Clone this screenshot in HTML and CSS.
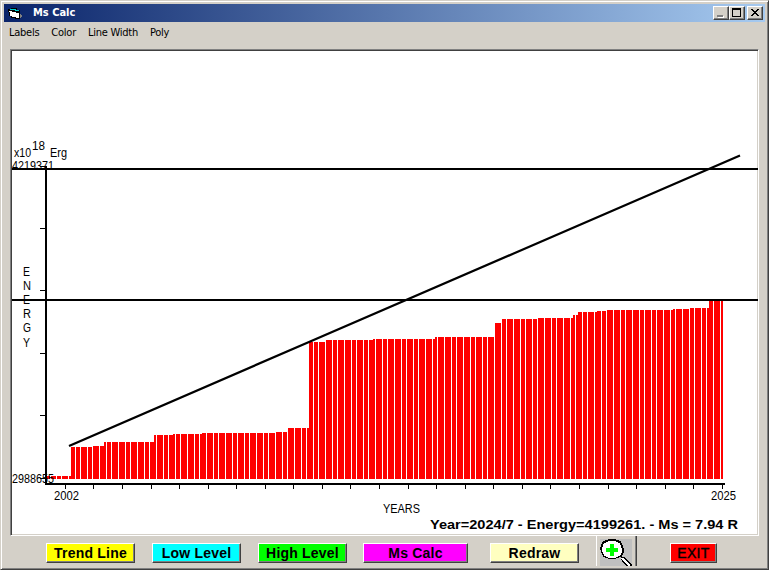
FILE: index.html
```html
<!DOCTYPE html>
<html lang="en">
<head>
    <meta charset="UTF-8">
    <title>Ms Calc</title>
    <link rel="stylesheet" href="styles.css">
</head>
<body>
    <div class="window">
        <header class="titlebar">
            <svg class="app-icon" width="16" height="16" viewBox="0 0 16 16" shape-rendering="crispEdges">
                <path fill="#000" d="M1 4h3V3h6v2h3v9H8v-1H4v-2H2V7H1z"/>
                <path fill="#fff" d="M2 6h3v1h4v1h3v5H9v-1H5v-1H3V7H2z"/>
                <path fill="#00d0d0" d="M3 4h6v1h3v1H8V5H3z"/>
                <path fill="#808080" d="M13 9h1v1h1v2h-1v1h-1z"/>
            </svg>
            <h1>Ms Calc</h1>
            <div class="controls">
                <button class="ctl"><svg width="14" height="12" shape-rendering="crispEdges"><path fill="#fff" d="M4 9h6v2H4z"/><path fill="#808080" d="M3 8h6v2H3z"/></svg></button>
                <button class="ctl"><svg width="14" height="12" shape-rendering="crispEdges"><path fill="#000" fill-rule="evenodd" d="M2 1h9v9H2zM3 3v6h7V3z"/></svg></button>
                <button class="ctl ctl-close"><svg width="14" height="12" shape-rendering="crispEdges"><path fill="#000" d="M3 2h2v1h1v1h2V3h1V2h2v1h-1v1H9v1H8v1h1v1h1v1h1v1H9V8H8V7H6v1H5v1H3V8h1V7h1V6h1V5H5V4H4V3H3z"/></svg></button>
            </div>
        </header>

        <nav class="menu">
            <span>Labels</span>
            <span>Color</span>
            <span>Line Width</span>
            <span>Poly</span>
        </nav>

        <main class="plot">
            <svg id="chart" width="746" height="484" viewBox="12 51 746 484">
                <g id="bars" shape-rendering="crispEdges"></g>
                <g id="axes" shape-rendering="crispEdges">
                    <rect x="12" y="168" width="746" height="2"/>
                    <rect x="12" y="299" width="746" height="2"/>
                    <rect x="45" y="166" width="2" height="319"/>
                    <rect x="45" y="483" width="680" height="2"/>
                </g>
                <path class="trend" d="M69 446L309 342L740 155.500"/>
                <g class="labels">
                    <text x="14" y="157" textLength="17" lengthAdjust="spacingAndGlyphs">x10</text>
                    <text x="32" y="150" textLength="13" lengthAdjust="spacingAndGlyphs">18</text>
                    <text x="50" y="157" textLength="17" lengthAdjust="spacingAndGlyphs">Erg</text>
                    <text x="12" y="170" textLength="42" lengthAdjust="spacingAndGlyphs">4219371</text>
                    <text x="12" y="483" textLength="42" lengthAdjust="spacingAndGlyphs">2988655</text>
                    <text x="54" y="500" textLength="25" lengthAdjust="spacingAndGlyphs">2002</text>
                    <text x="711" y="500" textLength="25" lengthAdjust="spacingAndGlyphs">2025</text>
                    <text x="383" y="513" textLength="37" lengthAdjust="spacingAndGlyphs">YEARS</text>
                    <text x="23" y="276" textLength="7" lengthAdjust="spacingAndGlyphs">E</text>
                    <text x="23" y="290" textLength="8" lengthAdjust="spacingAndGlyphs">N</text>
                    <text x="23" y="304" textLength="7" lengthAdjust="spacingAndGlyphs">E</text>
                    <text x="23" y="318" textLength="8" lengthAdjust="spacingAndGlyphs">R</text>
                    <text x="23" y="332" textLength="8" lengthAdjust="spacingAndGlyphs">G</text>
                    <text x="23" y="347" textLength="7" lengthAdjust="spacingAndGlyphs">Y</text>
                </g>
                <text class="status" x="430" y="529" textLength="308" lengthAdjust="spacingAndGlyphs">Year=2024/7 - Energy=4199261. - Ms = 7.94 R</text>
            </svg>
        </main>

        <footer class="toolbar">
            <button class="btn yellow">Trend Line</button>
            <button class="btn cyan">Low Level</button>
            <button class="btn green">High Level</button>
            <button class="btn magenta">Ms Calc</button>
            <button class="btn cream">Redraw</button>
            <button class="zoom">
                <svg width="32" height="27" viewBox="0 0 32 27" shape-rendering="crispEdges">
                    <path fill="#c0c0c0" d="M0 0h32v27H0z"/>
                    <path fill="#000" d="M8 0h8v1h3v1h2v2h1v2h1v3h1v5h-1v2h-1v2h3v1h1v1h1v1h1v1h1v1h1v1h1v1h1v3h-5v-1h-1v-1h-1v-1h-1v-1h-1v-1h-1v-2h-1v-3h-2v1h-3v1H8v-1H5v-1H3v-2H2v-2H1v-3H0V8h1V5h1V3h1V2h2V1h3z"/>
                    <path fill="#fff" d="M8 2h8v1h2v1h2v2h1v3h1v5h-1v2h-1v1h-2v1h-2v1H8v-1H6v-1H4v-2H3v-2H2V8h1V5h1V4h2V3h2z"/>
                    <path fill="#fff" d="M21 19h3v1h1v1h1v1h1v1h1v1h1v1h1v2h-2v-1h-1v-1h-1v-1h-1v-1h-1v-1h-1v-1h-1z"/>
                    <path fill="#0f0" d="M10 5h4v4h4v4h-4v4h-4v-4H6V9h4z"/>
                </svg>
            </button>
            <button class="btn red">EXIT</button>
        </footer>
    </div>
    <script src="chart.js"></script>
</body>
</html>
```
FILE: styles.css
```css
body {
    margin: 0;
    background-color: #d4d0c8;
    overflow: hidden;
}

.window {
    box-sizing: border-box;
    width: 769px;
    height: 570px;
    padding: 2px;
    background-color: #d4d0c8;
    border: 1px solid #404040;
    border-top-color: #d4d0c8;
    border-left-color: #d4d0c8;
    box-shadow: inset 1px 1px #fff, inset -1px -1px #808080;
    display: flex;
    flex-direction: column;
}

.titlebar {
    display: flex;
    flex-shrink: 0;
    align-items: center;
    height: 18px;
    margin: 1px 1px 0;
    padding: 0 2px 0 3px;
    background: linear-gradient(to right, #0a246a, #a6caf0);
}

.titlebar h1 {
    flex: 1;
    margin: 0 0 0 10px;
    color: #fff;
    font: bold 11px/18px "DejaVu Sans Condensed", sans-serif;
}

.controls {
    display: flex;
}

.ctl {
    box-sizing: border-box;
    width: 16px;
    height: 14px;
    padding: 0;
    background-color: #d4d0c8;
    border: 1px solid;
    border-color: #fff #404040 #404040 #fff;
    box-shadow: inset -1px -1px #808080;
}

.ctl svg {
    display: block;
}

.ctl-close {
    margin-left: 2px;
}

.menu {
    display: flex;
    flex-shrink: 0;
    gap: 12px;
    height: 27px;
    padding-left: 6px;
    color: #000;
    font: 11px/22px "DejaVu Sans Condensed", sans-serif;
    letter-spacing: -0.25px;
}

.plot {
    flex-shrink: 0;
    width: 747px;
    height: 485px;
    margin-left: 7px;
    background-color: #fff;
    border: 1px solid;
    border-color: #808080 #fff #fff #808080;
    box-shadow: inset 1px 1px #404040, inset -1px -1px #d4d0c8;
}

.plot svg {
    display: block;
    margin: 1px 0 0 1px;
}

.trend {
    fill: none;
    stroke: #000;
    stroke-width: 2.3;
}

.labels {
    font: 12px "Liberation Sans", sans-serif;
}

.status {
    font: bold 13.5px "Liberation Sans", sans-serif;
}

.toolbar {
    display: flex;
    align-items: flex-start;
    height: 30px;
    padding-left: 43px;
}

.btn {
    box-sizing: border-box;
    width: 89px;
    height: 20px;
    margin: 7px 17px 0 0;
    padding: 0;
    border: 1px solid;
    border-color: #fff #404040 #404040 #fff;
    box-shadow: inset -1px -1px #808080;
    color: #000;
    font: bold 14px/18px "Liberation Sans", sans-serif;
    letter-spacing: 0.2px;
}

.yellow {
    background-color: #ff0;
}

.cyan {
    background-color: #0ff;
}

.green {
    background-color: #0f0;
    margin-right: 16px;
}

.magenta {
    width: 105px;
    margin-right: 22px;
    background-color: #f0f;
}

.cream {
    background-color: #ffffc0;
}

.red {
    width: 47px;
    margin-left: 33px;
    background-color: #f00;
    font-weight: normal;
    letter-spacing: 0.3px;
    -webkit-text-stroke: 0.4px #000;
}

.zoom {
    box-sizing: border-box;
    width: 41px;
    height: 30px;
    padding: 3px 3px 0 4px;
    background-color: #d4d0c8;
    border: 0;
    box-shadow: inset 1px 0 #fff, inset -1px 0 #404040, inset -2px 0 #808080;
}

.zoom svg {
    display: block;
}
```
FILE: chart.js
```js
const NS = 'http://www.w3.org/2000/svg';
const bars = document.getElementById('bars');
const axes = document.getElementById('axes');

// [left edge, top] of every energy level
const levels = [
    [47, 476], [71, 447], [92, 446], [104, 442], [154, 435], [173, 434],
    [202, 433], [276, 432], [288, 428], [309, 342], [326, 340], [373, 339],
    [435, 337], [495, 323], [502, 319], [538, 318], [573, 315], [578, 312],
    [597, 311], [607, 310], [673, 309], [690, 308], [709, 301]
];
const right = 723;
const base = 479;

function addRect(parent, x, y, width, height, fill) {
    const rect = document.createElementNS(NS, 'rect');
    rect.setAttribute('x', x);
    rect.setAttribute('y', y);
    rect.setAttribute('width', width);
    rect.setAttribute('height', height);
    rect.setAttribute('fill', fill);
    parent.appendChild(rect);
}

levels.forEach(([x, y], i) => {
    const end = i + 1 < levels.length ? levels[i + 1][0] : right;
    addRect(bars, x, y, end - x, base - y, '#f00');
});

// white gaps between the bars
const gaps = [
    50, 56, 61, 68, 75, 80, 87, 92, 99, 106, 111, 118, 125, 130, 137, 144, 149, 156, 163, 168,
    175, 180, 187, 194, 199, 206, 213, 218, 225, 232, 237, 244, 249, 256, 263, 268,
    275, 282, 287, 294, 301, 306, 313, 318, 325, 332, 337, 344, 351, 356, 363,
    368, 375, 382, 387, 394, 401, 406, 413, 418, 425, 432, 437, 444, 451, 456,
    463, 470, 475, 482, 487, 494, 501, 506, 513, 520, 525, 532, 537, 544, 551,
    556, 563, 570, 575, 582, 587, 594, 601, 606, 613, 620, 625, 632, 639, 644,
    651, 656, 663, 670, 675, 682, 689, 694, 701, 706, 713, 720
];
gaps.forEach(x => addRect(bars, x, 301, 1, base - 301, '#fff'));

const yearTicks = [
    65, 93, 122, 151, 179, 208, 236, 265, 293, 322, 350, 379,
    408, 436, 465, 493, 522, 550, 579, 608, 636, 665, 693, 722
];
yearTicks.forEach(x => addRect(axes, x, 485, 1, 4, '#000'));

const energyTicks = [166, 228, 290, 353, 415, 478];
energyTicks.forEach(y => addRect(axes, 40, y, 5, 1, '#000'));
```
